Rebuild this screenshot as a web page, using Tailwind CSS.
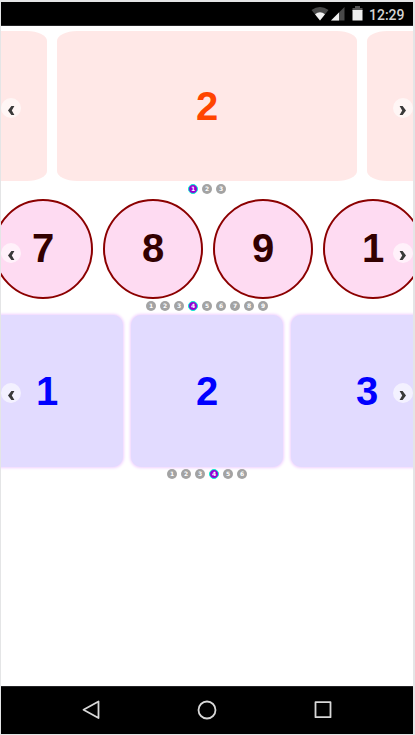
<!DOCTYPE html>
<html lang="en">
<head>
<meta charset="utf-8">
<title>Carousels</title>
<script src="https://cdn.jsdelivr.net/npm/@tailwindcss/browser@4"></script>
</head>
<body class="w-[415px] h-[735px] overflow-hidden bg-[#e4e5e6] pt-[2px] pl-px pb-px font-['Liberation_Sans',Arial,sans-serif]">
<svg class="hidden">
  <symbol id="prev" viewBox="0 0 20 20"><path d="M10.400 8H13.400L10.800 12.500L13.400 17H10.400L7 12.500Z" fill="#3a3a3a"/></symbol>
  <symbol id="next" viewBox="0 0 20 20"><path d="M9.600 8H6.600L9.200 12.500L6.600 17H9.600L13 12.500Z" fill="#3a3a3a"/></symbol>
</svg>
<main class="flex flex-col w-[412px] h-[732px] bg-white overflow-hidden">
  <header class="flex shrink-0 items-center h-6 bg-black border-b border-[#242426] pl-[310px]">
    <svg class="w-[18px] h-[14px]" viewBox="0 0 18 14"><path d="M.5 3Q9-3 17.500 3L9 13.500Z" fill="#484848"/><path d="M4 7.200Q9 3.500 14 7.200L9 13.500Z" fill="#f1f1f1"/></svg>
    <svg class="ml-[1px] w-[15px] h-[14px]" viewBox="0 0 15 14"><path d="M14.500 0V13.500H1Z" fill="#484848"/><path d="M9 5.500V13.500H1Z" fill="#f1f1f1"/></svg>
    <svg class="ml-[7px] w-[11px] h-[15px]" viewBox="0 0 11 15"><path d="M3 0H8V2H10.500V5H.5V2H3Z" fill="#555"/><path d="M.5 4H10.500V14.500H.5Z" fill="#eee"/></svg>
    <span class="ml-[6px] pt-[2px] text-[14px] leading-6 font-medium text-[#d4d4d4] font-[Roboto,sans-serif]">12:29</span>
  </header>

  <section class="relative mt-[5px] h-[168px] shrink-0">
    <div class="flex justify-center gap-[10px] text-[40px] font-bold text-[#ff4500]">
      <div class="w-[300px] h-[150px] shrink-0 rounded-[20px/10px] bg-[#ffe8e7]"></div>
      <div class="w-[300px] h-[150px] shrink-0 rounded-[20px/10px] bg-[#ffe8e7] flex items-center justify-center">2</div>
      <div class="w-[300px] h-[150px] shrink-0 rounded-[20px/10px] bg-[#ffe8e7]"></div>
    </div>
    <div class="mt-[3px] flex justify-center gap-1 text-[6px] leading-[10px] text-center font-bold text-white font-['DejaVu_Sans',sans-serif]">
      <span class="size-[10px] rounded-full bg-[#9400d3] border border-[#00f5d0] leading-[8px]">1</span><span class="size-[10px] rounded-full bg-[#a3a3a3]">2</span><span class="size-[10px] rounded-full bg-[#a3a3a3]">3</span>
    </div>
    <svg class="absolute left-0 top-[67px] size-5 rounded-full bg-white/60"><use href="#prev"/></svg>
    <svg class="absolute right-0 top-[67px] size-5 rounded-full bg-white/60"><use href="#next"/></svg>
  </section>

  <section class="relative h-[116px] shrink-0">
    <div class="-ml-2 flex gap-[10px] text-[40px] font-bold text-[#330000]">
      <div class="size-[100px] shrink-0 rounded-full border-2 border-[#8b0000] bg-[#fedbf2] pb-[2px] flex items-center justify-center">7</div>
      <div class="size-[100px] shrink-0 rounded-full border-2 border-[#8b0000] bg-[#fedbf2] pb-[2px] flex items-center justify-center">8</div>
      <div class="size-[100px] shrink-0 rounded-full border-2 border-[#8b0000] bg-[#fedbf2] pb-[2px] flex items-center justify-center">9</div>
      <div class="size-[100px] shrink-0 rounded-full border-2 border-[#8b0000] bg-[#fedbf2] pb-[2px] flex items-center justify-center">1</div>
    </div>
    <div class="mt-[2px] flex justify-center gap-1 text-[6px] leading-[10px] text-center font-bold text-white font-['DejaVu_Sans',sans-serif]">
      <span class="size-[10px] rounded-full bg-[#a3a3a3]">1</span><span class="size-[10px] rounded-full bg-[#a3a3a3]">2</span><span class="size-[10px] rounded-full bg-[#a3a3a3]">3</span><span class="size-[10px] rounded-full bg-[#9400d3] border border-[#00f5d0] leading-[8px]">4</span><span class="size-[10px] rounded-full bg-[#a3a3a3]">5</span><span class="size-[10px] rounded-full bg-[#a3a3a3]">6</span><span class="size-[10px] rounded-full bg-[#a3a3a3]">7</span><span class="size-[10px] rounded-full bg-[#a3a3a3]">8</span><span class="size-[10px] rounded-full bg-[#a3a3a3]">9</span>
    </div>
    <svg class="absolute left-0 top-[44px] size-5 rounded-full bg-white/60"><use href="#prev"/></svg>
    <svg class="absolute right-0 top-[44px] size-5 rounded-full bg-white/60"><use href="#next"/></svg>
  </section>

  <section class="relative h-[165px] shrink-0">
    <div class="flex justify-center gap-2 text-[40px] font-bold text-[#0000ff]">
      <div class="w-[152px] h-[152px] shrink-0 rounded-[10px] bg-[#e2dbff] shadow-[0_0_3px_1px_#f0d0ff] flex items-center justify-center">1</div>
      <div class="w-[152px] h-[152px] shrink-0 rounded-[10px] bg-[#e2dbff] shadow-[0_0_3px_1px_#f0d0ff] flex items-center justify-center">2</div>
      <div class="w-[152px] h-[152px] shrink-0 rounded-[10px] bg-[#e2dbff] shadow-[0_0_3px_1px_#f0d0ff] flex items-center justify-center">3</div>
    </div>
    <div class="mt-[2px] flex justify-center gap-1 text-[6px] leading-[10px] text-center font-bold text-white font-['DejaVu_Sans',sans-serif]">
      <span class="size-[10px] rounded-full bg-[#a3a3a3]">1</span><span class="size-[10px] rounded-full bg-[#a3a3a3]">2</span><span class="size-[10px] rounded-full bg-[#a3a3a3]">3</span><span class="size-[10px] rounded-full bg-[#9400d3] border border-[#00f5d0] leading-[8px]">4</span><span class="size-[10px] rounded-full bg-[#a3a3a3]">5</span><span class="size-[10px] rounded-full bg-[#a3a3a3]">6</span>
    </div>
    <svg class="absolute left-0 top-[68px] size-5 rounded-full bg-white/60"><use href="#prev"/></svg>
    <svg class="absolute right-0 top-[68px] size-5 rounded-full bg-white/60"><use href="#next"/></svg>
  </section>

  <nav class="mt-auto flex h-12 shrink-0 items-center justify-center gap-24 bg-black border-t border-[#242426] pb-[2px]">
    <svg class="size-5" viewBox="0 0 20 20" fill="none" stroke="#d8d8d8" stroke-width="1.8" stroke-linejoin="round"><path d="M17.500 1.500V18L2.500 9.800Z"/></svg>
    <svg class="size-5" viewBox="0 0 20 20" fill="none" stroke="#d8d8d8" stroke-width="1.800"><circle cx="10" cy="10" r="8.500"/></svg>
    <svg class="size-5" viewBox="0 0 20 20" fill="none" stroke="#d8d8d8" stroke-width="1.800" stroke-linejoin="round"><rect x="2.500" y="2.200" width="15" height="15"/></svg>
  </nav>
</main>
</body>
</html>
